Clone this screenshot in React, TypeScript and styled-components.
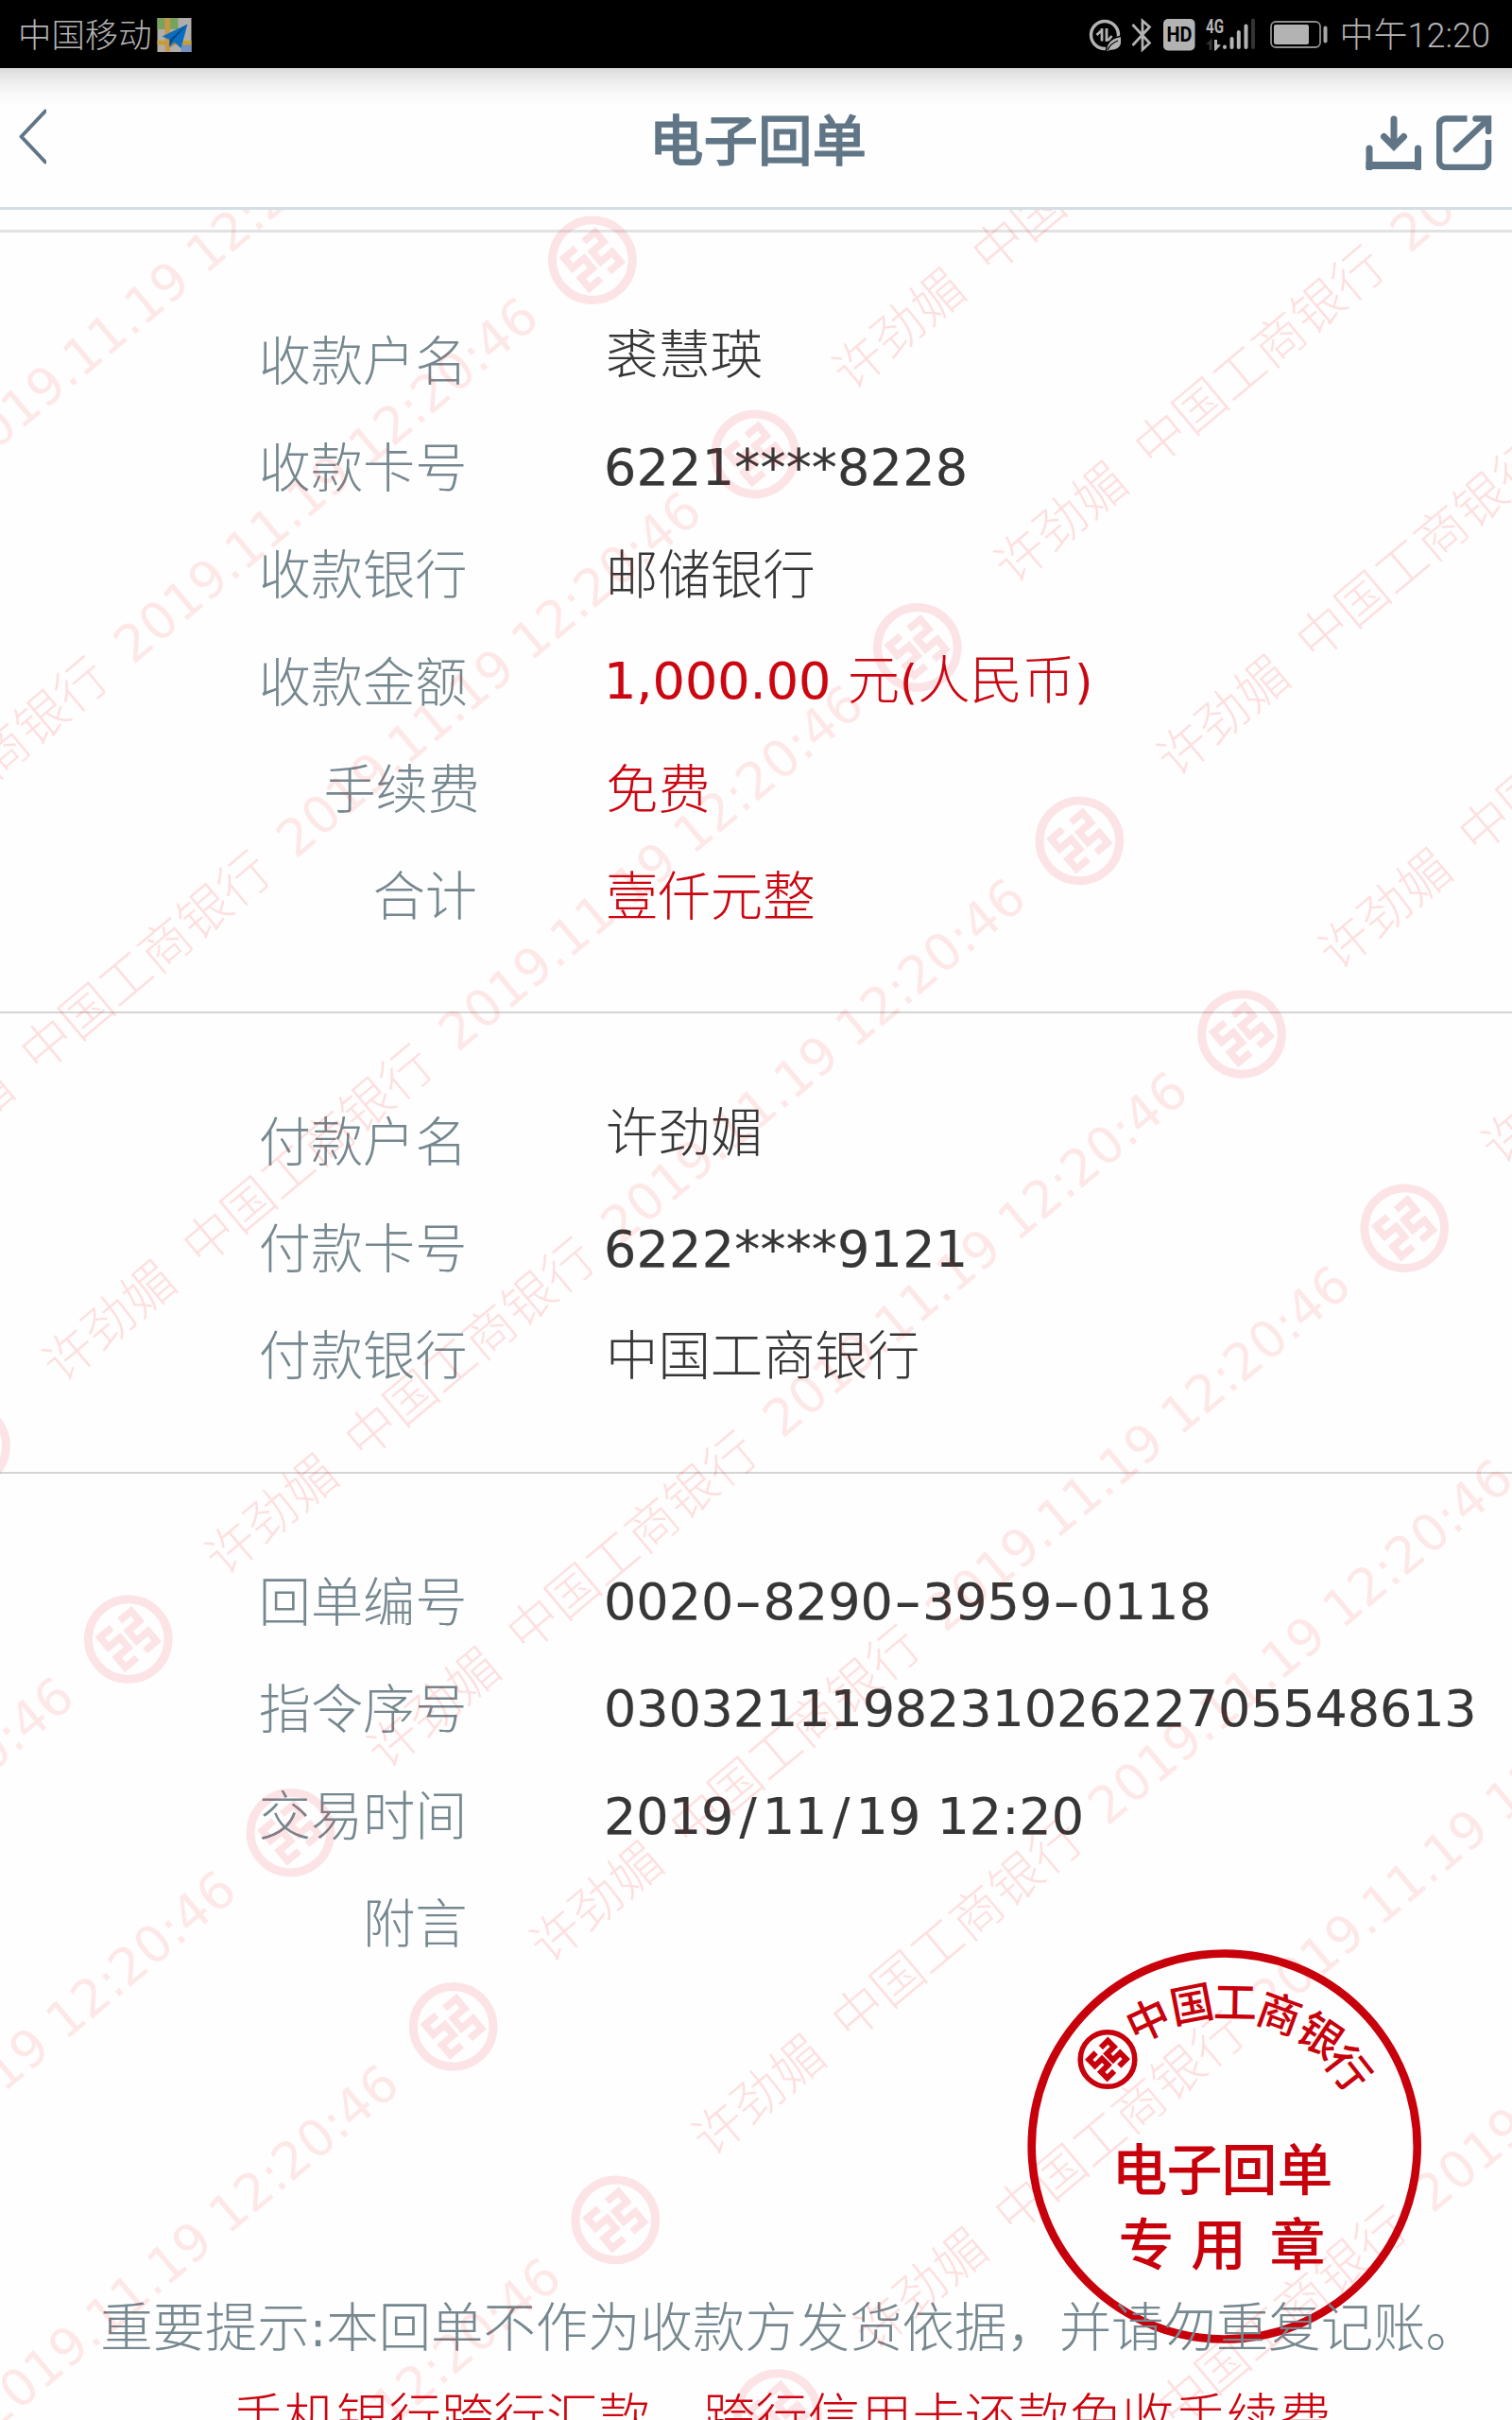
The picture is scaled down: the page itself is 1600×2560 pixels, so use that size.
import React from "react";
import styled, { createGlobalStyle } from "styled-components";

const SLATE = "#607585";
const LABEL = "#76888f";
const INK = "#363636";
const RED = "#cc0611";
const SEAL = "#c7000b";

const GlobalStyle = createGlobalStyle`
  * { box-sizing: border-box; }
  body { margin: 0; background: #fefefe; }
`;

const Screen = styled.div`
  position: relative;
  width: 1600px;
  height: 2560px;
  overflow: hidden;
  display: flex;
  flex-direction: column;
  background: #fefefe;
  font-family: "DejaVu Sans", "Noto Sans CJK SC", sans-serif;
`;

const StatusBar = styled.div`
  flex: none;
  height: 72px;
  padding: 2px 23px 0 19px;
  display: flex;
  align-items: center;
  justify-content: space-between;
  background: #000;
  color: #b3b3b3;
  font: 300 36px/70px Roboto, "Noto Sans CJK SC", sans-serif;
`;

const StatusGroup = styled.div`
  display: flex;
  align-items: center;
  height: 70px;
  white-space: nowrap;
`;

const Carrier = styled.span`
  font-size: 35.4px;
  padding-top: 1px;
`;

const Clock = styled.span`
  padding-top: 2px;
`;

const Header = styled.header`
  flex: none;
  height: 150px;
  padding: 0 21px 0 18px;
  display: grid;
  grid-template-columns: 202px 1fr 195px;
  align-items: center;
  border-bottom: 3px solid #d3dfe4;
  background: linear-gradient(#d6d6d6 0, #e0e0e0 4px, #ededed 14px, #f8f8f8 26px, #fefefe 40px);
`;

const Title = styled.h1`
  margin: 0;
  padding-bottom: 2px;
  text-align: center;
  color: ${SLATE};
  font: 500 57.5px/84px "Noto Sans CJK SC", sans-serif;
  -webkit-text-stroke: 0.9px ${SLATE};
`;

const Actions = styled.div`
  display: flex;
  justify-content: flex-end;
  gap: 16px;
  padding-top: 10px;
`;

const Receipt = styled.main`
  flex: 1;
  padding-top: 21px;
  display: flex;
  flex-direction: column;
`;

const Section = styled.section<{ $height: number; $top: number; $line: number }>`
  flex: none;
  height: ${(p) => p.$height}px;
  padding-top: ${(p) => p.$top}px;
  border-top: ${(p) => p.$line}px solid ${(p) => (p.$line > 2 ? "#e2e2e2" : "#d4d4d4")};
`;

const Row = styled.div`
  display: flex;
  align-items: center;
  height: 113.3px;
  white-space: nowrap;
`;

const Label = styled.div<{ $end: number }>`
  width: ${(p) => p.$end}px;
  margin-right: ${(p) => 641 - p.$end}px;
  flex: none;
  text-align: right;
  color: ${LABEL};
  font-size: 55.2px;
  line-height: 80px;
  font-weight: 300;
`;

const Value = styled.div<{ $red?: boolean; $lift?: number; $track?: number }>`
  color: ${(p) => (p.$red ? RED : INK)};
  padding-bottom: ${(p) => (p.$lift || 0) * 2}px;
  letter-spacing: ${(p) => p.$track ?? 0}px;
  font-size: 55.4px;
  line-height: 80px;
  font-weight: 300;
`;

const Digits = styled.span`
  font-size: 54px;
  font-weight: 400;
  margin-left: -2px;
  -webkit-text-stroke: 0.2px currentColor;
`;

const Paren = styled.span`
  font-size: 49px;
  font-weight: 400;
`;

const Dash = styled.span`
  display: inline-block;
  width: 31px;
  text-align: center;
  transform: scaleX(1.5);
`;

const Slash = styled.span`
  margin: 0 6px;
`;

const Notice = styled.footer`
  position: relative;
  height: 200px;
  text-align: center;
  white-space: nowrap;
`;

const NoticeLine = styled.p<{ $red?: boolean; $shift: number }>`
  margin: 0;
  padding-left: ${(p) => p.$shift}px;
  color: ${(p) => (p.$red ? RED : LABEL)};
  font-size: 55.4px;
  line-height: 95px;
  font-weight: 300;
`;

const Colon = styled.span`
  font-weight: 400;
  font-size: 52px;
`;

const SealLayer = styled.svg`
  position: absolute;
  left: 1086px;
  top: 2061px;
  width: 420px;
  height: 420px;
`;

const WatermarkLayer = styled.div`
  position: absolute;
  left: 0;
  top: 222px;
  width: 1600px;
  height: 2338px;
  overflow: hidden;
  pointer-events: none;
`;

const WatermarkSheet = styled.div`
  position: absolute;
  left: -2049.5px;
  top: -615px;
  display: grid;
  grid-template-columns: repeat(3, 1314.6px);
  grid-auto-rows: 267.3px;
  transform-origin: 2676px 668.25px;
  transform: rotate(-40deg);
  color: rgba(255, 0, 0, 0.12);
  font-size: 54px;
  font-weight: 300;
  line-height: 80px;
`;

const WatermarkCell = styled.div`
  display: flex;
  align-items: center;
  white-space: nowrap;
`;

const WatermarkText = styled.span<{ $width: number; $gap: number; $date?: boolean }>`
  flex: none;
  width: ${(p) => p.$width}px;
  margin-left: ${(p) => p.$gap}px;
  letter-spacing: ${(p) => (p.$date ? -0.2 : 0.4)}px;
  font-weight: ${(p) => (p.$date ? 400 : 300)};
  color: ${(p) => (p.$date ? "rgba(255, 0, 0, 0.09)" : "inherit")};
  padding-bottom: 4px;
`;

function BankMark({ stroke }: { stroke: number }) {
  return (
    <g fill="none" stroke="currentColor" strokeWidth={stroke}>
      <path d="M-5.6-20.8H-21.6V-7H-5.6V7H-21.6V20.8H-5.6" />
      <path d="M5.6-20.8H21.6V-7H5.6V7H21.6V20.8H5.6" />
    </g>
  );
}

const MarkSvg = styled.svg`
  flex: none;
  width: 94px;
  height: 94px;
  color: rgba(235, 20, 40, 0.11);
`;

function WatermarkLogo() {
  return (
    <MarkSvg viewBox="-47 -47 94 94">
      <circle r="42.3" fill="none" stroke="currentColor" strokeWidth="9" />
      <BankMark stroke={7.6} />
    </MarkSvg>
  );
}

function Watermark() {
  return (
    <WatermarkLayer>
      <WatermarkSheet>
        {Array.from({ length: 36 }, (_, i) => (
          <WatermarkCell key={i}>
            <WatermarkLogo />
            <WatermarkText $width={164} $gap={72}>许劲媚</WatermarkText>
            <WatermarkText $width={328} $gap={29}>中国工商银行</WatermarkText>
            <WatermarkText $width={570} $gap={26} $date>2019.11.19 12:20:46</WatermarkText>
          </WatermarkCell>
        ))}
      </WatermarkSheet>
    </WatermarkLayer>
  );
}

const ARC = [
  { c: "中", x: 129, y: 76, r: -25 },
  { c: "国", x: 175, y: 59, r: -11 },
  { c: "工", x: 221, y: 57, r: 1 },
  { c: "商", x: 268, y: 69, r: 20 },
  { c: "银", x: 311, y: 92, r: 34 },
  { c: "行", x: 341, y: 127, r: 52 },
];

function Seal() {
  return (
    <SealLayer viewBox="0 0 420 420" color={SEAL}>
      <circle cx="209.7" cy="209.5" r="204" fill="none" stroke={SEAL} strokeWidth="8.6" />
      <g transform="translate(86 117.5)">
        <circle r="28.8" fill="none" stroke={SEAL} strokeWidth="5.6" />
        <g transform="rotate(-45) scale(.66)">
          <BankMark stroke={9} />
        </g>
      </g>
      <g fill={SEAL} fontFamily='"Noto Sans CJK SC", sans-serif' textAnchor="middle" fontWeight="500">
        {ARC.map((a) => (
          <text key={a.c} fontSize="46" transform={`translate(${a.x} ${a.y}) rotate(${a.r})`} y="17">
            {a.c}
          </text>
        ))}
        <text fontSize="59" x="120 178 236 295" y="256">电子回单</text>
        <text fontSize="59" x="127 203.5 287" y="335">专用章</text>
      </g>
    </SealLayer>
  );
}

const StatusSvg = styled.svg<{ $gap: number }>`
  flex: none;
  margin-right: ${(p) => p.$gap}px;
`;

function DataSaverIcon() {
  return (
    <StatusSvg $gap={11} width="34" height="34" viewBox="0 0 34 34">
      <circle cx="17" cy="17" r="14.5" fill="none" stroke="#b3b3b3" strokeWidth="3.4" />
      <path d="M8.5 17l5-4.500" fill="none" stroke="#b3b3b3" strokeWidth="2.8" />
      <path d="M14 10v13.5M19 10v14M20.5 23l4-5" fill="none" stroke="#b3b3b3" strokeWidth="2.8" />
      <path d="M18.5 34.500C18 25 24 20 35 18V25c-1 6-6 9-12 8.500l-2 1z" fill="#b3b3b3" stroke="#000" strokeWidth="1.4" />
      <path d="M20 33c2-5 6-8 11-10" fill="none" stroke="#000" strokeWidth="1.3" />
    </StatusSvg>
  );
}

function BluetoothIcon() {
  return (
    <StatusSvg $gap={12} width="22" height="36" viewBox="0 0 22 36">
      <path d="M1.5 7l18 19.500L12 33.500V3l7.500 6.500L1.500 29" fill="none" stroke="#b3b3b3" strokeWidth="2.7" />
    </StatusSvg>
  );
}

function HdIcon() {
  return (
    <StatusSvg $gap={11} width="34" height="34" viewBox="0 0 34 34">
      <rect width="33.5" height="33.5" rx="5" fill="#b3b3b3" />
      <text x="17" y="24.3" textAnchor="middle" textLength="27" lengthAdjust="spacingAndGlyphs" fontFamily="Roboto, sans-serif" fontSize="21.5" fontWeight="700" fill="#000">HD</text>
    </StatusSvg>
  );
}

function SignalIcon() {
  return (
    <StatusSvg $gap={15} width="53" height="36" viewBox="0 0 53 36">
      <text x="0" y="15.5" textLength="19" lengthAdjust="spacingAndGlyphs" fontFamily="Roboto, sans-serif" fontSize="19.5" fontWeight="700" fill="#b3b3b3">4G</text>
      <path d="M0 28l6.500-6.500V34H3.500V28z" fill="#333" />
      <path d="M9 23h3v5l4 .5-5.500 6H9z" fill="#b3b3b3" />
      <g strokeWidth="4" strokeLinecap="round" stroke="#b3b3b3">
        <path d="M20 30.500v.500M27.500 22v9M34.800 15v16M42.500 8.500V31" />
        <path d="M50 2.500V31" stroke="#333" />
      </g>
    </StatusSvg>
  );
}

function BatteryIcon() {
  return (
    <StatusSvg $gap={12} width="62" height="30" viewBox="0 0 62 30">
      <rect x="1" y="1" width="52" height="27" rx="5" fill="none" stroke="#8c8c8c" strokeWidth="1.8" />
      <rect x="4" y="4" width="37" height="21" rx="2" fill="#b3b3b3" />
      <rect x="56.5" y="5.5" width="4" height="18" rx="2" fill="#a6a6a6" />
    </StatusSvg>
  );
}

function MapIcon() {
  return (
    <StatusSvg $gap={0} width="42" height="36" viewBox="-5 0 41 36">
      <rect width="36" height="36" fill="#b1aeaa" />
      <path d="M0 0h22v12H0z" fill="#78a35c" />
      <path d="M25 28h11v8H25z" fill="#7590c2" />
      <path d="M0 24h36v4.500H0z" fill="#c4a031" />
      <path d="M8 0h5.500v36H8z" fill="#c79748" />
      <path d="M12 28l7-7 2 5-8 6z" fill="#75705f" opacity=".6" />
      <path d="M32 6.500L5 19.500l8 3.500v7l5-4.500 7 6.500z" fill="#0b6cc0" />
      <path d="M32 6.500L13 23v7l3-6z" fill="#074881" />
    </StatusSvg>
  );
}

const BackSvg = styled.svg`
  margin-bottom: 4px;
`;

function BackIcon() {
  return (
    <BackSvg width="31" height="60" viewBox="0 0 31 60">
      <path d="M30 3.500L4.500 30.500l25.500 27" fill="none" stroke={SLATE} strokeWidth="4" strokeLinecap="round" strokeLinejoin="round" />
    </BackSvg>
  );
}

function DownloadIcon() {
  return (
    <svg width="59" height="58" viewBox="0 0 59 58" fill="none" stroke={SLATE}>
      <path d="M4 35v20.500M55.500 35v20.500" strokeWidth="7" strokeLinecap="round" />
      <path d="M.500 53h58.500" strokeWidth="8" />
      <path d="M30 4v26" strokeWidth="7" strokeLinecap="round" />
      <path d="M19.500 22.500L30 33l10.500-10.500" strokeWidth="7" strokeLinecap="round" strokeLinejoin="miter" />
    </svg>
  );
}

function ShareIcon() {
  return (
    <svg width="59" height="58" viewBox="0 0 59 58" fill="none" stroke={SLATE} strokeWidth="6.5">
      <path d="M32.500 3.500H10a7 7 0 0 0-7 7V48a7 7 0 0 0 7 7h38a7 7 0 0 0 7-7V26" />
      <path d="M41.500 3.500H55V17" strokeLinecap="round" />
      <path d="M21 36L54 5" strokeLinecap="round" />
    </svg>
  );
}

export default function App() {
  return (
    <Screen>
      <GlobalStyle />
      <StatusBar>
        <StatusGroup>
          <Carrier>中国移动</Carrier>
          <MapIcon />
        </StatusGroup>
        <StatusGroup>
          <DataSaverIcon />
          <BluetoothIcon />
          <HdIcon />
          <SignalIcon />
          <BatteryIcon />
          <Clock>中午12:20</Clock>
        </StatusGroup>
      </StatusBar>
      <Header>
        <BackIcon />
        <Title>电子回单</Title>
        <Actions>
          <DownloadIcon />
          <ShareIcon />
        </Actions>
      </Header>
      <Receipt>
        <Section $height={827} $top={80} $line={3}>
          <Row><Label $end={494.500}>收款户名</Label><Value $lift={6.500}>裘慧瑛</Value></Row>
          <Row><Label $end={494.500}>收款卡号</Label><Value $lift={1} $track={0.2}><Digits>6221****8228</Digits></Value></Row>
          <Row><Label $end={494.500}>收款银行</Label><Value>邮储银行</Value></Row>
          <Row><Label $end={494.500}>收款金额</Label><Value $red $lift={1}><Digits>1,000.00 </Digits>元<Paren>(</Paren>人民币<Paren>)</Paren></Value></Row>
          <Row><Label $end={508}>手续费</Label><Value $red>免费</Value></Row>
          <Row><Label $end={505}>合计</Label><Value $red>壹仟元整</Value></Row>
        </Section>
        <Section $height={487} $top={80} $line={2}>
          <Row><Label $end={494.500}>付款户名</Label><Value $lift={10}>许劲媚</Value></Row>
          <Row><Label $end={494.500}>付款卡号</Label><Value $lift={0.500} $track={0.2}><Digits>6222****9121</Digits></Value></Row>
          <Row><Label $end={494.500}>付款银行</Label><Value>中国工商银行</Value></Row>
        </Section>
        <Section $height={859} $top={80} $line={2}>
          <Row>
            <Label $end={494.500}>回单编号</Label>
            <Value $lift={1}><Digits>0020<Dash>-</Dash>8290<Dash>-</Dash>3959<Dash>-</Dash>0118</Digits></Value>
          </Row>
          <Row><Label $end={494.500}>指令序号</Label><Value $lift={1} $track={-0.15}><Digits>030321119823102622705548613</Digits></Value></Row>
          <Row>
            <Label $end={494.500}>交易时间</Label>
            <Value $lift={1}><Digits>2019<Slash>/</Slash>11<Slash>/</Slash>19 12:20</Digits></Value>
          </Row>
          <Row><Label $end={494.500}>附言</Label></Row>
        </Section>
        <Seal />
        <Notice>
          <NoticeLine $shift={70}>重要提示<Colon>:</Colon>本回单不作为收款方发货依据，并请勿重复记账。</NoticeLine>
          <NoticeLine $red $shift={54}>手机银行跨行汇款、跨行信用卡还款免收手续费</NoticeLine>
        </Notice>
      </Receipt>
      <Watermark />
    </Screen>
  );
}
